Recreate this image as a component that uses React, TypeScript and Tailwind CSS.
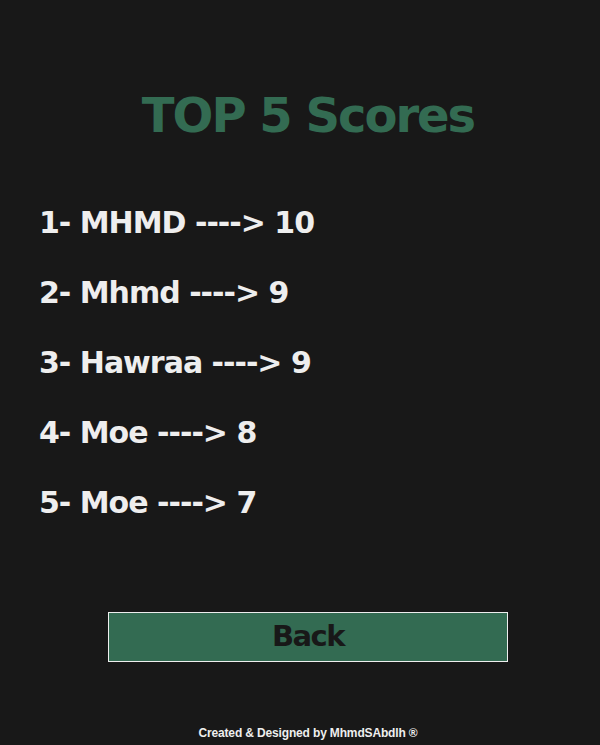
export default function App() {
  const rows = [
    "1- MHMD ----> 10",
    "2- Mhmd ----> 9",
    "3- Hawraa ----> 9",
    "4- Moe ----> 8",
    "5- Moe ----> 7",
  ];
  return (
    <div className="w-[600px] h-[745px] bg-[#181818] pl-[16px] flex flex-col items-center" style={{ fontFamily: '"DejaVu Sans", Verdana, sans-serif' }}>
      <h1 className="mt-[86px] text-[48px] leading-[58px] font-bold tracking-[-2px] text-[#336b52]">TOP 5 Scores</h1>
      <div className="self-stretch pl-[23px] mt-[60px] flex flex-col gap-[32px]">
        {rows.map((r) => (
          <div key={r} className="text-[30px] leading-[38px] font-bold tracking-[-1px] text-[#eeeeee]">{r}</div>
        ))}
      </div>
      <button className="mt-[90px] w-[400px] h-[50px] bg-[#336b52] border border-[#eeeeee] text-[#181818] text-[29px] tracking-[-1.5px] font-bold">Back</button>
      <div className="mt-[62px] text-[12px] font-bold tracking-[-0.15px] text-[#eeeeee]" style={{ fontFamily: '"Liberation Sans", Arial, sans-serif' }}>Created &amp; Designed by MhmdSAbdlh ®</div>
    </div>
  );
}
